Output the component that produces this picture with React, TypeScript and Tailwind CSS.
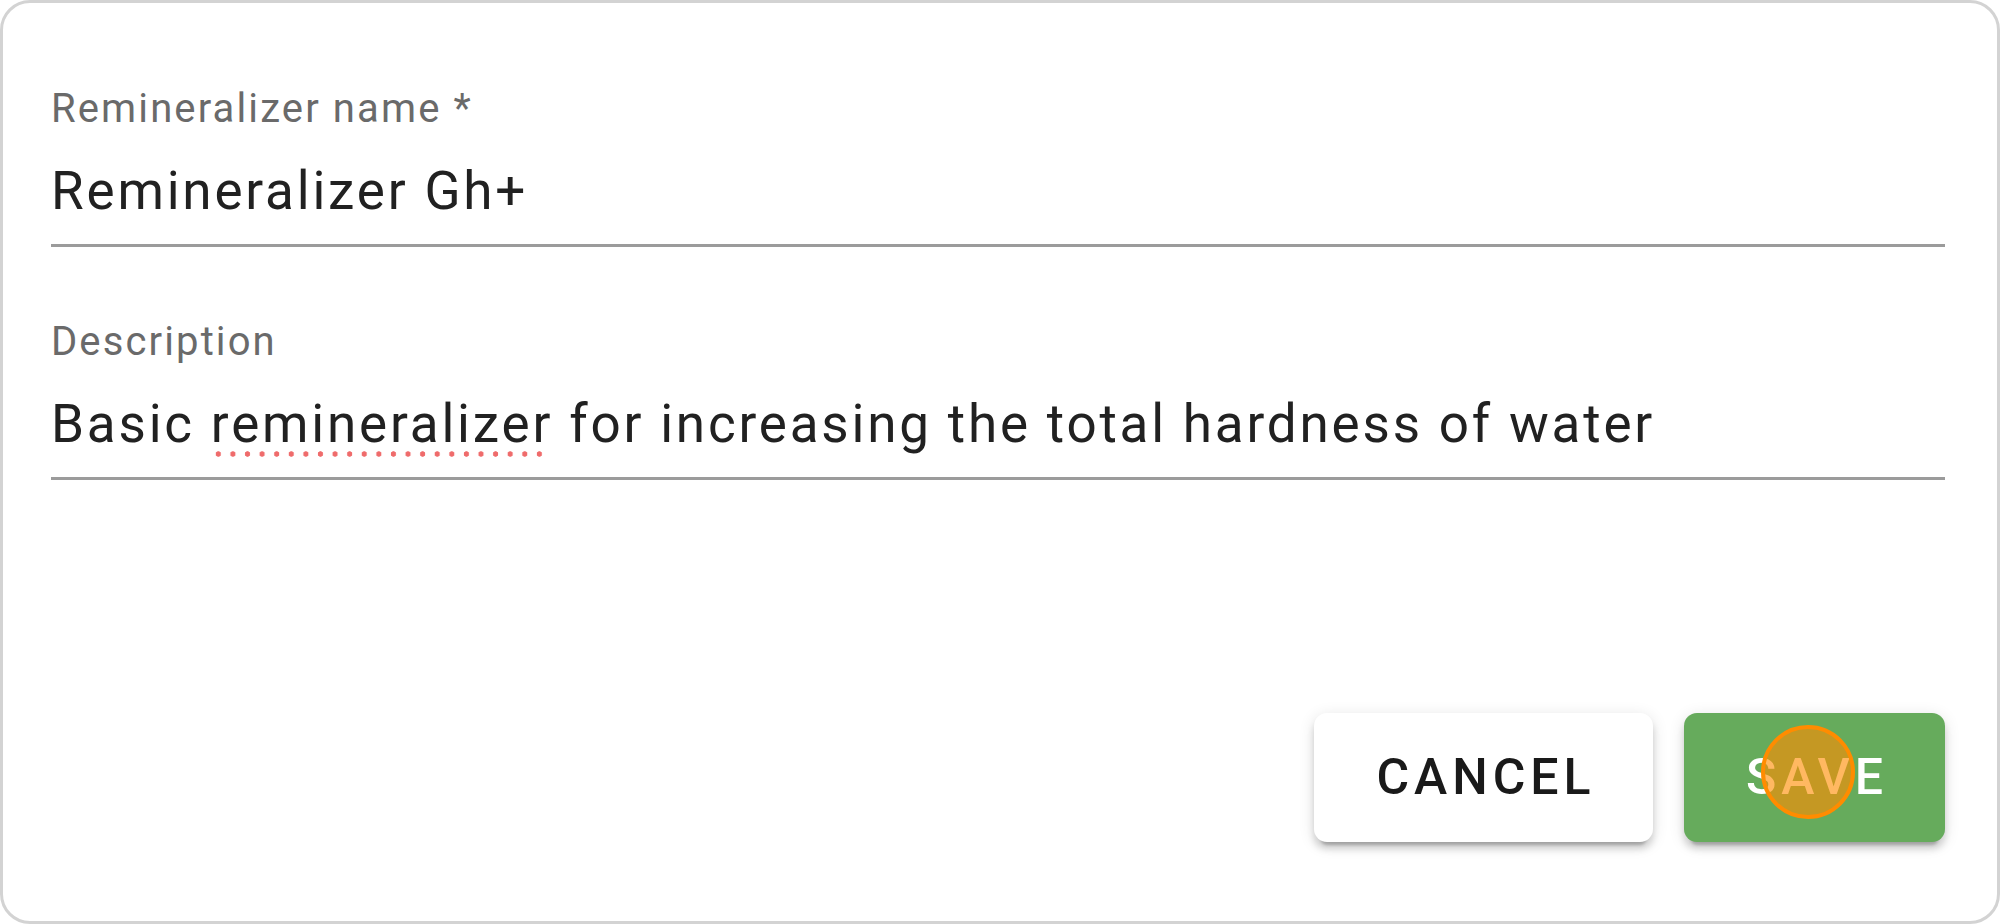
export default function App() {
  return (
    <div className="box-border w-[2000px] h-[924px] bg-white">
      <div className="box-border w-[2000px] h-[924px] rounded-[30px] border-[3px] border-[#d3d3d3] bg-white flex flex-col pl-[48px] pr-[52px] pb-[79px] font-[Roboto,sans-serif]">
        <div className="pt-[86px]">
          <div className="text-[40px] leading-[40px] text-[#6a6a6a] tracking-[0.053em]">Remineralizer name *</div>
          <div className="mt-[36px] text-[53px] leading-[53px] text-[#212121] tracking-[0.053em]">Remineralizer Gh+</div>
          <div className="mt-[26px] h-[3px] bg-[#9b9b9b]" />
        </div>
        <div className="pt-[75px]">
          <div className="text-[40px] leading-[40px] text-[#6a6a6a] tracking-[0.053em]">Description</div>
          <div className="mt-[36px] text-[53px] leading-[53px] text-[#212121] tracking-[0.053em]">
            Basic{" "}
            <span className="relative">
              remineralizer
              <span className="absolute left-0 right-[3px] bottom-[-2px] h-[6px] bg-[radial-gradient(circle,#ef6b6b_2.4px,transparent_3px)] bg-[length:14.6px_6px] bg-repeat-x" />
            </span>{" "}
            for increasing the total hardness of water
          </div>
          <div className="mt-[26px] h-[3px] bg-[#9b9b9b]" />
        </div>
        <div className="flex-1" />
        <div className="flex justify-end gap-[31px]">
          <div className="w-[339px] h-[129px] rounded-[13px] bg-white flex items-center justify-center shadow-[0_10px_3px_-7px_rgba(0,0,0,0.2),0_7px_7px_0_rgba(0,0,0,0.14),0_3px_16px_0_rgba(0,0,0,0.12)]">
            <span className="text-[50px] font-medium tracking-[0.1em] text-[#1a1a1a] pl-[0.1em]">CANCEL</span>
          </div>
          <div className="relative w-[261px] h-[129px] rounded-[13px] bg-[#66ab5c] flex items-center justify-center shadow-[0_10px_3px_-7px_rgba(0,0,0,0.2),0_7px_7px_0_rgba(0,0,0,0.14),0_3px_16px_0_rgba(0,0,0,0.12)]">
            <span className="text-[50px] font-medium tracking-[0.1em] text-white pl-[0.1em]">SAVE</span>
            <span className="absolute left-[77px] top-[12px] w-[94px] h-[94px] rounded-full border-[4px] border-[#ff8c00] bg-[rgba(255,140,0,0.62)]" />
          </div>
        </div>
      </div>
    </div>
  );
}
